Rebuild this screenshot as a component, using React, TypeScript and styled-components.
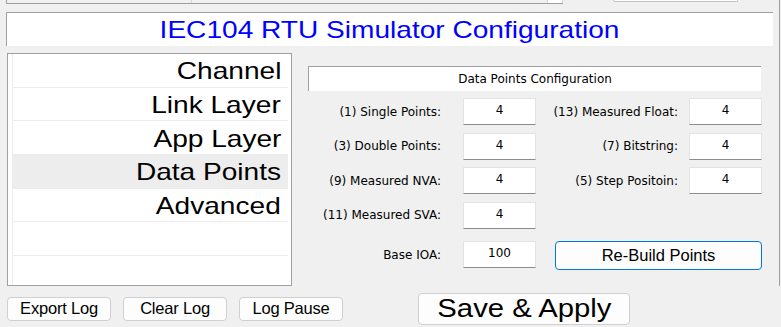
import * as React from 'react'
import styled, { createGlobalStyle } from 'styled-components'

const GlobalStyle = createGlobalStyle`
  html, body {
    margin: 0;
    padding: 0;
    background: #f0f0f0;
  }
  body {
    width: 781px;
    height: 327px;
    overflow: hidden;
    font-family: "DejaVu Sans", Tahoma, sans-serif;
    color: #000;
  }
`

// the big Arial captions in the form come out horizontally stretched
const Wide = styled.span<{ $origin?: string }>`
  display: inline-block;
  white-space: nowrap;
  transform: scaleX(1.17);
  transform-origin: ${(p) => p.$origin ?? 'center'};
`

const Page = styled.div`
  width: 781px;
  height: 327px;
  display: flex;
  flex-direction: column;
`

const Upper = styled.div`
  width: 780px;
  height: 286px;
  box-sizing: border-box;
  border-right: 1px solid #a0a0a0;
  display: flex;
  flex-direction: column;
`

const TopStrip = styled.div`
  display: flex;
  height: 4px;
  padding-left: 6px;
`

const StatusPanel = styled.div`
  display: flex;
  width: 557px;
  height: 4px;
  box-sizing: border-box;
  border-left: 1px solid #a0a0a0;
  border-bottom: 1px solid #a0a0a0;
`

const StatusCell = styled.div<{ $width: number; $white?: boolean }>`
  width: ${(p) => p.$width}px;
  box-sizing: border-box;
  border-right: 1px solid #d4d4d4;
  background: ${(p) => (p.$white ? '#fff' : '#f0f0f0')};
`

const TopButton = styled.div`
  margin-left: 50px;
  width: 125px;
  height: 2px;
  box-sizing: border-box;
  border: 1px solid #c4c4c4;
  border-top: none;
  border-radius: 0 0 4px 4px;
  background: #fdfdfd;
`

const TitleBox = styled.div`
  margin: 8px 0 0 6px;
  width: 767px;
  height: 34px;
  box-sizing: border-box;
  background: #fff;
  border-top: 1px solid #a0a0a0;
  border-left: 1px solid #a0a0a0;
  display: flex;
  align-items: center;
  justify-content: center;
  font-family: "Liberation Sans", Arial, sans-serif;
  font-size: 24px;
  color: #0000ff;
`

const Main = styled.div`
  display: flex;
  margin-top: 7px;
`

const NavList = styled.div`
  margin-left: 7px;
  width: 285px;
  height: 233px;
  box-sizing: border-box;
  border: 1px solid #a0a0a0;
  background: #fff;
  padding: 0 3px 0 4px;
  overflow: hidden;
`

const NavItem = styled.div<{ $active?: boolean }>`
  height: 33.67px;
  box-sizing: border-box;
  border-left: 1px solid #ececec;
  border-bottom: 1px solid #ececec;
  background: ${(p) => (p.$active ? '#ededed' : '#fff')};
  display: flex;
  align-items: center;
  justify-content: flex-end;
  padding: 2px 7px 0 0;
  font-family: "Liberation Sans", Arial, sans-serif;
  font-size: 24px;
  color: #000;
`

const ConfigPanel = styled.div`
  margin-left: 16px;
  padding-top: 13px;
  width: 454px;
`

const SectionHeader = styled.div`
  width: 453px;
  height: 25px;
  box-sizing: border-box;
  background: #fff;
  border-top: 1px solid #a0a0a0;
  border-left: 1px solid #a0a0a0;
  display: flex;
  align-items: center;
  justify-content: center;
  font-size: 12px;
`

const FieldGrid = styled.div`
  margin-top: 7px;
  display: grid;
  grid-template-columns: 155px 73px 153px 73px;
  grid-auto-rows: minmax(27px, auto);
  row-gap: 7.5px;
`

const FieldLabel = styled.label<{ $gap: number; $pushed?: boolean }>`
  grid-column: ${(p) => (p.$gap > 15 ? 1 : 3)};
  height: 27px;
  margin-top: ${(p) => (p.$pushed ? 5 : 0)}px;
  display: flex;
  align-items: center;
  justify-content: flex-end;
  padding-right: ${(p) => p.$gap}px;
  font-size: 12px;
  white-space: nowrap;
`

const ValueBox = styled.input<{ $pushed?: boolean }>`
  width: 73px;
  height: 27px;
  margin: ${(p) => (p.$pushed ? 5 : 0)}px 0 0;
  box-sizing: border-box;
  border: 1px solid #e3e3e3;
  border-bottom: 1px solid #8c8c8c;
  background: #fff;
  padding: 0 0 3px;
  text-align: center;
  font-family: "DejaVu Sans", Tahoma, sans-serif;
  font-size: 12px;
  color: #000;
  outline: none;
`

const RebuildButton = styled.button`
  grid-column: 3 / 5;
  justify-self: end;
  width: 207px;
  height: 29px;
  margin-top: 5px;
  box-sizing: border-box;
  border: 1px solid #0078d7;
  border-radius: 4px;
  background: #fdfdfd;
  font-family: "Liberation Sans", Arial, sans-serif;
  font-size: 16.5px;
  color: #000;
  padding: 0;
`

const Footer = styled.div`
  display: flex;
  align-items: center;
  gap: 12px;
  height: 41px;
  padding: 4px 0 0 7px;
`

const LogButton = styled.button`
  width: 104px;
  height: 24px;
  box-sizing: border-box;
  border: 1px solid #d0d0d0;
  border-radius: 4px;
  background: #fdfdfd;
  padding: 0;
  font-family: "Liberation Sans", Arial, sans-serif;
  font-size: 16.5px;
  letter-spacing: -0.2px;
  color: #000;
`

const SaveButton = styled.button`
  margin-left: 63px;
  width: 212px;
  height: 32px;
  box-sizing: border-box;
  border: 1px solid #d0d0d0;
  border-radius: 4px;
  background: #fdfdfd;
  padding: 0;
  font-family: "Liberation Sans", Arial, sans-serif;
  font-size: 25px;
  color: #000;
`

const navItems = ['Channel', 'Link Layer', 'App Layer', 'Data Points', 'Advanced', '', '']

const fieldRows: [string, string][] = [
  ['(1) Single Points:', '(13) Measured Float:'],
  ['(3) Double Points:', '(7) Bitstring:'],
  ['(9) Measured NVA:', '(5) Step Positoin:'],
]

export default function App(): JSX.Element {
  return (
    <Page>
      <GlobalStyle />
      <Upper>
        <TopStrip>
          <StatusPanel>
            <StatusCell $width={185} />
            <StatusCell $width={356} />
            <StatusCell $width={15} $white />
          </StatusPanel>
          <TopButton />
        </TopStrip>

        <TitleBox>
          <Wide>IEC104 RTU Simulator Configuration</Wide>
        </TitleBox>

        <Main>
          <NavList>
            {navItems.map((item, i) => (
              <NavItem key={i} $active={item === 'Data Points'}>
                <Wide $origin="right">{item}</Wide>
              </NavItem>
            ))}
          </NavList>

          <ConfigPanel>
            <SectionHeader>Data Points Configuration</SectionHeader>
            <FieldGrid>
              {fieldRows.map(([left, right]) => (
                <React.Fragment key={left}>
                  <FieldLabel $gap={22}>{left}</FieldLabel>
                  <ValueBox defaultValue="4" />
                  <FieldLabel $gap={11}>{right}</FieldLabel>
                  <ValueBox defaultValue="4" />
                </React.Fragment>
              ))}
              <FieldLabel $gap={22}>(11) Measured SVA:</FieldLabel>
              <ValueBox defaultValue="4" />
              <FieldLabel $gap={22} $pushed>
                Base IOA:
              </FieldLabel>
              <ValueBox defaultValue="100" $pushed />
              <RebuildButton type="button">Re-Build Points</RebuildButton>
            </FieldGrid>
          </ConfigPanel>
        </Main>
      </Upper>

      <Footer>
        <LogButton type="button">Export Log</LogButton>
        <LogButton type="button">Clear Log</LogButton>
        <LogButton type="button">Log Pause</LogButton>
        <SaveButton type="button">
          <Wide>Save &amp; Apply</Wide>
        </SaveButton>
      </Footer>
    </Page>
  )
}
